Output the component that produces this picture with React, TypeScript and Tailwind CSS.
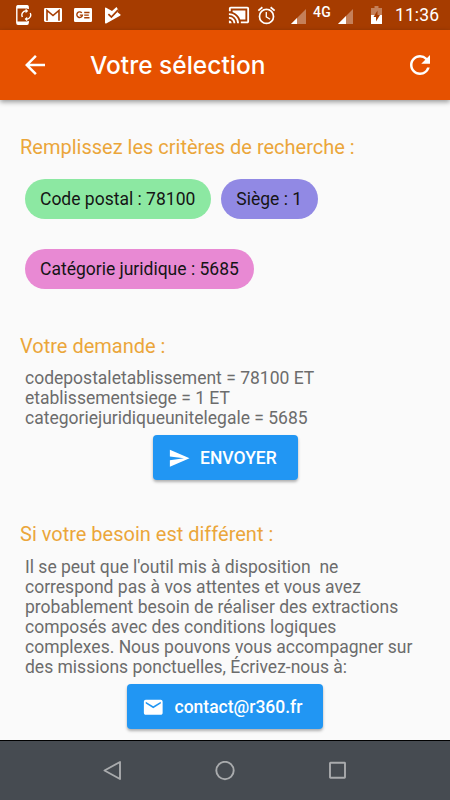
import type { ReactNode } from "react";
import {
  MdArrowBack,
  MdCastConnected,
  MdEmail,
  MdOutlineAlarm,
  MdRefresh,
  MdSend,
} from "react-icons/md";

const criteria = [
  { label: "Code postal : 78100", color: "bg-[#8ce8a2]" },
  { label: "Siège : 1", color: "bg-[#9189e4]" },
  { label: "Catégorie juridique : 5685", color: "bg-[#e889d3]" },
];

function SignalIcon({ level }: { level: number }) {
  return (
    <svg className="mt-[3px]" width="15" height="15" viewBox="0 0 15 15" fill="#fff">
      <path d="M15 0V15H0Z" opacity="0.35" />
      <path d={`M${level} ${15 - level}V15H0Z`} />
    </svg>
  );
}

function StatusBar() {
  return (
    <div className="flex h-[30px] items-center bg-[#a63c00] pl-4 pr-[10px] text-white">
      <svg width="16" height="20" viewBox="0 0 16 20" fill="none" stroke="#fff" strokeWidth="1.4">
        <path d="M12.2 4V2.2Q12.2 .7 10.8 .7H2.2Q.8 .7 .8 2.2V17.8Q.8 19.3 2.2 19.3H10.8Q12.2 19.3 12.2 17.8V16" />
        <path d="M1 2H12M1 17.8H12" strokeWidth="2.8" />
        <path d="M6.4 12A4.2 4.2 0 0 1 10 5.8M10.8 14.2A4.2 4.2 0 0 0 14.2 8" />
        <path d="M9.6 3.6 12.2 5.9 9.6 8.2ZM11.2 11.8 8.6 14.1 11.2 16.4Z" fill="#fff" stroke="none" />
      </svg>
      <svg className="ml-[12px]" width="18" height="14" viewBox="0 0 18 14">
        <rect width="18" height="14" rx="1.4" fill="#fff" />
        <path d="M3 12.7V2.5L9 7.5 15 2.5V12.7" fill="none" stroke="#a63c00" strokeWidth="1.6" />
      </svg>
      <svg className="ml-3" width="18" height="14" viewBox="0 0 18 14">
        <rect width="18" height="14" rx="1.2" fill="#fff" />
        <path
          d="M7.8 4.9A2.8 2.8 0 1 0 8.4 7.1H5.8M10.2 4.5H15.5M10.2 7.1H14.8M10.2 9.7H15.5"
          fill="none"
          stroke="#a63c00"
          strokeWidth="1.4"
        />
      </svg>
      <svg className="ml-[13px]" width="16" height="17" viewBox="0 0 16 17">
        <path d="M0 1.4Q0 0 1.2.8L7 4 11.5 0 13.5 3.2 12.5 5.2 15.5 7.5Q16 8.2 15 8.8L1.2 16.4Q0 17 0 15.5Z" fill="#fff" />
        <path d="M3.4 7.2 6.4 10 13.2 2.8" fill="none" stroke="#a63c00" strokeWidth="1.7" />
      </svg>
      <div className="ml-auto flex items-center">
        <MdCastConnected size={22} />
        <MdOutlineAlarm className="ml-[6px]" size={21} />
        <span className="ml-[14px]">
          <SignalIcon level={6} />
        </span>
        <span className="mb-[6px] ml-[7px] w-[19px] text-[14px] font-medium leading-none tracking-[0.4px]">
          4G
        </span>
        <span className="ml-[6px]">
          <SignalIcon level={8} />
        </span>
        <svg className="ml-[18px]" width="11" height="18" viewBox="0 0 11 18">
          <path d="M3.5 0H7.5V2H11V9H0V2H3.5Z" fill="#fff" opacity="0.35" />
          <path d="M0 9H11V18H0Z" fill="#fff" />
          <path d="M6.5 4.5 2.5 11H5V15.5L9 9H6.5Z" fill="#a63c00" />
        </svg>
        <span className="ml-[13px] mt-px w-[45px] text-[17.5px] tracking-[0.1px]">11:36</span>
      </div>
    </div>
  );
}

function AppBar() {
  return (
    <header className="relative flex h-[70px] items-center bg-[#e65100] px-5 text-white shadow-[0_2px_5px_rgba(0,0,0,0.4)]">
      <MdArrowBack size={30} />
      <h1 className="ml-10 font-[Inter,sans-serif] text-[24.5px] font-medium">Votre sélection</h1>
      <MdRefresh className="-mr-[5px] ml-auto" size={30} />
    </header>
  );
}

function Section({ title, children }: { title: string; children: ReactNode }) {
  return (
    <section>
      <h2 className="px-5 text-[20px] leading-6 text-[#eba63a]">{title}</h2>
      {children}
    </section>
  );
}

function ActionButton({ icon, width, children }: { icon: ReactNode; width: string; children: ReactNode }) {
  return (
    <button
      className={`mx-auto mt-[7px] flex h-[45px] items-center gap-[10px] rounded-[4px] bg-[#2196f3] pl-[15px] pt-px text-[17.5px] font-medium text-white shadow-[0_2px_3px_rgba(0,0,0,0.3)] ${width}`}
    >
      {icon}
      {children}
    </button>
  );
}

function NavigationBar() {
  return (
    <nav className="flex h-[60px] items-center justify-center gap-[92px] border-t border-black bg-[#464b51]">
      <svg width="20" height="20" viewBox="0 0 20 20" fill="none" stroke="#a9abad" strokeWidth="1.9">
        <path d="M17 1V18L1.5 9.5Z" strokeLinejoin="round" />
      </svg>
      <svg width="20" height="20" viewBox="0 0 20 20" fill="none" stroke="#a9abad" strokeWidth="1.9">
        <circle cx="10" cy="9.5" r="8.7" />
      </svg>
      <svg width="20" height="20" viewBox="0 0 20 20" fill="none" stroke="#a9abad" strokeWidth="1.9">
        <rect x="3" y="1.7" width="15" height="15" rx="0.5" />
      </svg>
    </nav>
  );
}

export default function App() {
  return (
    <div className="flex h-[800px] w-[450px] flex-col overflow-hidden bg-[#fafafa] font-[Roboto,sans-serif]">
      <StatusBar />
      <AppBar />
      <main className="flex flex-1 flex-col pt-[35px]">
        <Section title="Remplissez les critères de recherche :">
          <div className="mt-5 flex flex-wrap gap-x-[10px] gap-y-[30px] px-[25px]">
            {criteria.map(({ label, color }) => (
              <span
                key={label}
                className={`flex h-10 items-center rounded-full pl-[15px] pr-4 text-[17.5px] text-[#151515] last:pr-[15px] ${color}`}
              >
                {label}
              </span>
            ))}
          </div>
        </Section>

        <div className="mt-[45px]">
          <Section title="Votre demande :">
            <p className="mt-[10px] px-[25px] text-[17.5px] leading-5 text-[#6c6c6c]">
              codepostaletablissement = 78100 ET
              <br />
              etablissementsiege = 1 ET
              <br />
              categoriejuridiqueunitelegale = 5685
            </p>
            <ActionButton icon={<MdSend size={22.5} />} width="w-[145px]">
              ENVOYER
            </ActionButton>
          </Section>
        </div>

        <div className="mt-[42px]">
          <Section title="Si votre besoin est différent :">
            <p className="mt-[11px] whitespace-pre pl-[25px] text-[17.5px] leading-5 text-[#6c6c6c]">
              {`Il se peut que l'outil mis à disposition  ne
correspond pas à vos attentes et vous avez
probablement besoin de réaliser des extractions
composés avec des conditions logiques
complexes. Nous pouvons vous accompagner sur
des missions ponctuelles, Écrivez-nous à:`}
            </p>
            <ActionButton icon={<MdEmail size={22.5} />} width="w-[196px]">
              contact@r360.fr
            </ActionButton>
          </Section>
        </div>
      </main>
      <NavigationBar />
    </div>
  );
}
